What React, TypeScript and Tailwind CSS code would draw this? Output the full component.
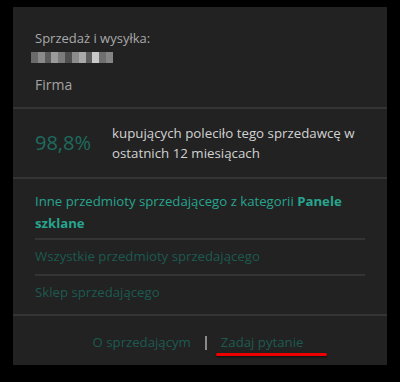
import React from "react";

const blurCells = ["#6a6a6a", "#8a8a8a", "#5c5c5c", "#9a9a9a", "#7b7b7b", "#4f4f4f", "#8c8c8c", "#a9a9a9", "#5e5e5e", "#c9c9c9", "#6f6f6f", "#858585"];

const SellerInfo = () => {
    return (
        <div className="w-[400px] h-[382px] bg-black pt-[7px] pl-[13px]" style={{ fontFamily: '"Open Sans", sans-serif' }}>
            <div className="w-[374px] h-[358px] bg-[#222222] flex flex-col">
                <div className="h-[102px] px-[22px] pt-[21px] border-b-2 border-[#343434]">
                    <div className="text-[13px] leading-[20px] text-[#a9a9a9]">Sprzedaż i wysyłka:</div>
                    <div className="flex mt-[4px] -ml-[4px] h-[11px] w-[82px]">
                        {blurCells.map((c, i) => (
                            <div key={i} className="flex-1" style={{ background: c }} />
                        ))}
                    </div>
                    <div className="mt-[12px] text-[14px] leading-[20px] text-[#a3a3a3]">Firma</div>
                </div>
                <div className="h-[70px] px-[22px] flex items-center border-b-2 border-[#343434]">
                    <div className="w-[77px] text-[20px] text-[#1d6c5f]">98,8%</div>
                    <div className="text-[13.3px] leading-[20px] text-[#d2d2d2] whitespace-nowrap">
                        kupujących poleciło tego sprzedawcę w<br />ostatnich 12 miesiącach
                    </div>
                </div>
                <div className="h-[137px] px-[22px] pt-[11px] border-b-2 border-[#343434]">
                    <div className="text-[13.2px] leading-[22px] text-[#27a48e] pb-[4px] border-b-2 border-[#343434]">
                        Inne przedmioty sprzedającego z kategorii <b className="font-bold">Panele szklane</b>
                    </div>
                    <div className="h-[36px] flex items-center text-[13.2px] text-[#1c5a50] border-b-2 border-[#343434]">
                        Wszystkie przedmioty sprzedającego
                    </div>
                    <div className="h-[34px] flex items-center text-[13.2px] text-[#1c5a50]">Sklep sprzedającego</div>
                </div>
                <div className="flex-1 flex items-center justify-center pt-[4px] text-[13.2px] text-[#1d5b51]">
                    <span className="ml-[-4px]">O sprzedającym</span>
                    <span className="mx-[14px] w-[2px] h-[14px] bg-[#8a8a8a]" />
                    <span className="relative">
                        Zadaj pytanie
                        <span className="absolute left-[-5px] top-[20px] w-[111px] h-[3px] rounded-full bg-[#ee0000] shadow-[0_1px_2px_rgba(0,0,0,0.6)]" />
                    </span>
                </div>
            </div>
        </div>
    );
};

export default function App() {
    return <SellerInfo />;
}
